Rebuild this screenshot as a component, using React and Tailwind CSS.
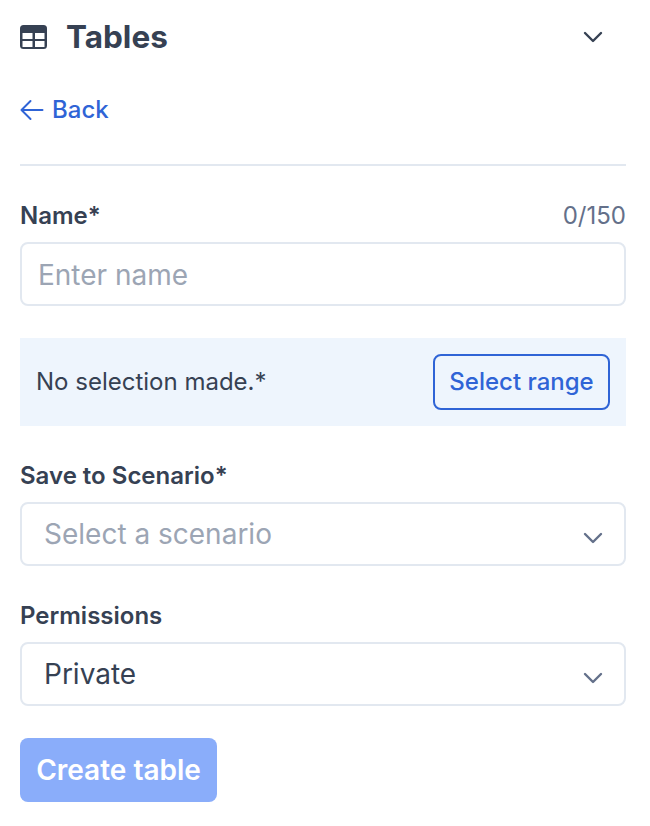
import React from "react";

const TableIcon = () => (
  <svg width="27" height="24" viewBox="0 0 27 24">
    <rect x="0" y="0" width="27" height="24" rx="3.5" fill="#364153" />
    <path d="M2.5 8h10v6h-10zM15 8h9.5v6H15zM2.5 16h10v6h-10zM15 16h9.5v6H15z" fill="#fff" />
  </svg>
);

const BackArrow = () => (
  <svg width="24" height="22" viewBox="0 0 24 22" fill="none" stroke="#2f64d6" strokeWidth="2" strokeLinecap="round" strokeLinejoin="round">
    <path d="M1.5 11h21M10.5 2l-9 9 9 9" />
  </svg>
);

const Chevron = ({ color }) => (
  <svg width="22" height="14" viewBox="0 0 22 14" fill="none" stroke={color} strokeWidth="2.4" strokeLinecap="round" strokeLinejoin="round">
    <path d="M3 3l8 8 8-8" />
  </svg>
);

const App = () => {
  return (
    <div className="w-[650px] h-[826px] bg-white px-5 font-['Inter',sans-serif] text-[#364153]">
      <div className="flex items-center h-[74px]">
        <TableIcon />
        <h1 className="ml-[19px] text-[31.5px] font-bold">Tables</h1>
        <div className="ml-auto mr-[26px] flex"><Chevron color="#364153" /></div>
      </div>
      <div className="flex items-center h-[72px] text-[#2f64d6] text-2xl font-medium">
        <BackArrow />
        <span className="ml-2">Back</span>
      </div>
      <div className="border-t-2 border-[#e2e8f0] w-[606px] mt-[18px]"></div>
      <div className="w-[606px]">
        <div className="flex justify-between items-center mt-[34px] h-8">
          <label className="text-2xl font-semibold">Name*</label>
          <span className="text-2xl text-[#64708a]">0/150</span>
        </div>
        <div className="mt-[10px] h-16 border-2 border-[#e2e8f0] rounded-lg flex items-center px-4 pt-[2px] text-[28px] text-[#9ca5b4]">Enter name</div>
        <div className="mt-8 h-[88px] bg-[#eef5fd] flex items-center justify-between px-4">
          <span className="text-2xl">No selection made.*</span>
          <button className="h-14 w-[177px] border-2 border-[#2f64d6] rounded-lg text-[#2f64d6] text-2xl font-medium">Select range</button>
        </div>
        <div className="mt-[34px] text-2xl font-semibold h-8 flex items-center">Save to Scenario*</div>
        <div className="mt-[10px] h-16 border-2 border-[#e2e8f0] rounded-lg flex items-center justify-between pl-[22px] pr-5 text-[28px] text-[#9ca5b4]">
          Select a scenario <span className="flex mt-2"><Chevron color="#64708a" /></span>
        </div>
        <div className="mt-[34px] text-2xl font-semibold h-8 flex items-center">Permissions</div>
        <div className="mt-[10px] h-16 border-2 border-[#e2e8f0] rounded-lg flex items-center justify-between pl-[22px] pr-5 text-[28px]">
          Private <span className="flex mt-2"><Chevron color="#64708a" /></span>
        </div>
        <button className="mt-8 h-16 w-[197px] bg-[#8aadfa] rounded-lg text-white text-[28px] font-semibold">Create table</button>
      </div>
    </div>
  );
};

export default App;
